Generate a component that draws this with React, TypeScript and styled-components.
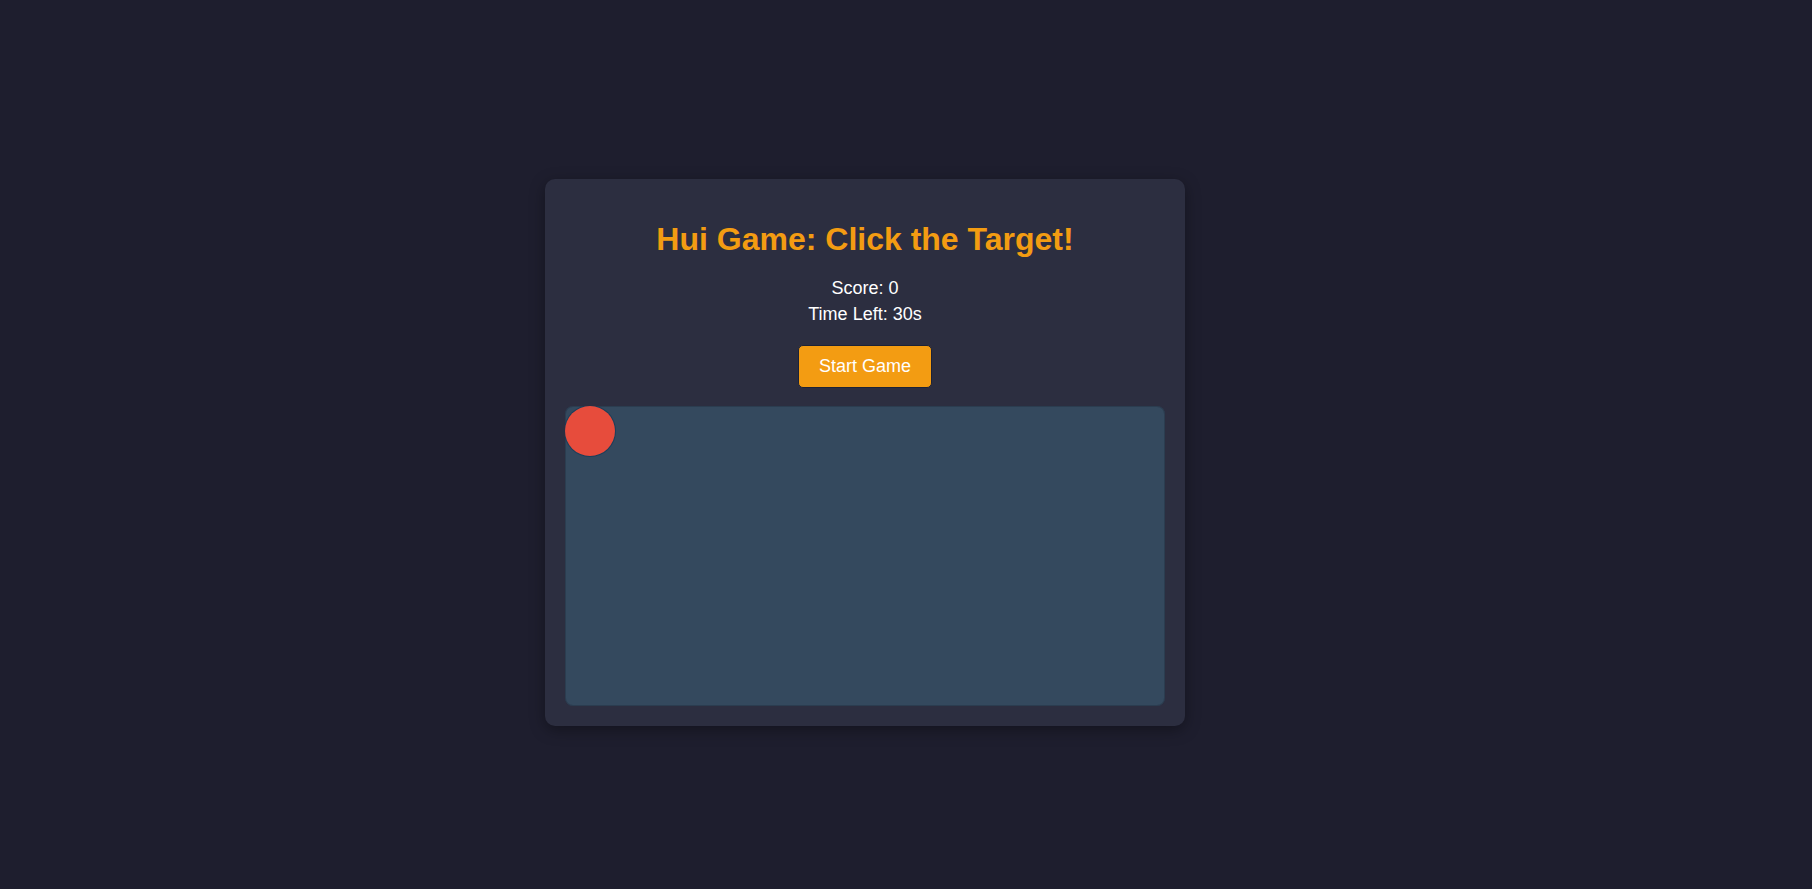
import React from "react";
import styled, { createGlobalStyle } from "styled-components";

const GlobalStyle = createGlobalStyle`
  html, body {
    margin: 0;
    padding: 0;
    background: #1e1e2e;
    font-family: "Liberation Sans", Arial, sans-serif;
  }
`;

const Page = styled.div`
  display: flex;
  justify-content: center;
  align-items: center;
  min-height: 100vh;
  box-sizing: border-box;
  padding: 16px 82px 0 0;
`;

const Card = styled.div`
  width: 600px;
  padding: 20px;
  background: #2c2e40;
  border-radius: 10px;
  box-shadow: 0 4px 15px rgba(0, 0, 0, 0.35);
  text-align: center;
`;

const Title = styled.h1`
  margin: 21.44px 0 20px;
  font-size: 32px;
  font-weight: bold;
  color: #f39c12;
`;

const Stats = styled.div`
  margin-bottom: 20px;
`;

const Stat = styled.p`
  margin: 5px 0;
  font-size: 18px;
  color: #ffffff;
`;

const StartButton = styled.button`
  padding: 10px 20px;
  font-family: "Liberation Sans", Arial, sans-serif;
  font-size: 18px;
  color: #ffffff;
  background: #f39c12;
  border: 1px solid #1c2236;
  border-radius: 5px;
  cursor: pointer;
  line-height: normal;
`;

const GameArea = styled.div`
  position: relative;
  margin-top: 18px;
  height: 300px;
  background: #34495e;
  border-radius: 8px;
  overflow: hidden;
  box-shadow: inset 0 0 0 1px rgba(30, 40, 55, 0.35);
`;

const Target = styled.div`
  position: absolute;
  left: 0;
  top: 0;
  width: 50px;
  height: 50px;
  box-sizing: border-box;
  border-radius: 50%;
  background: #e74c3c;
  box-shadow: 0 0 0 1px rgba(20, 60, 90, 0.8);
`;

export default function App() {
  return (
    <>
      <GlobalStyle />
      <Page>
        <Card>
          <Title>Hui Game: Click the Target!</Title>
          <Stats>
            <Stat>Score: 0</Stat>
            <Stat>Time Left: 30s</Stat>
          </Stats>
          <StartButton>Start Game</StartButton>
          <GameArea>
            <Target />
          </GameArea>
        </Card>
      </Page>
    </>
  );
}
